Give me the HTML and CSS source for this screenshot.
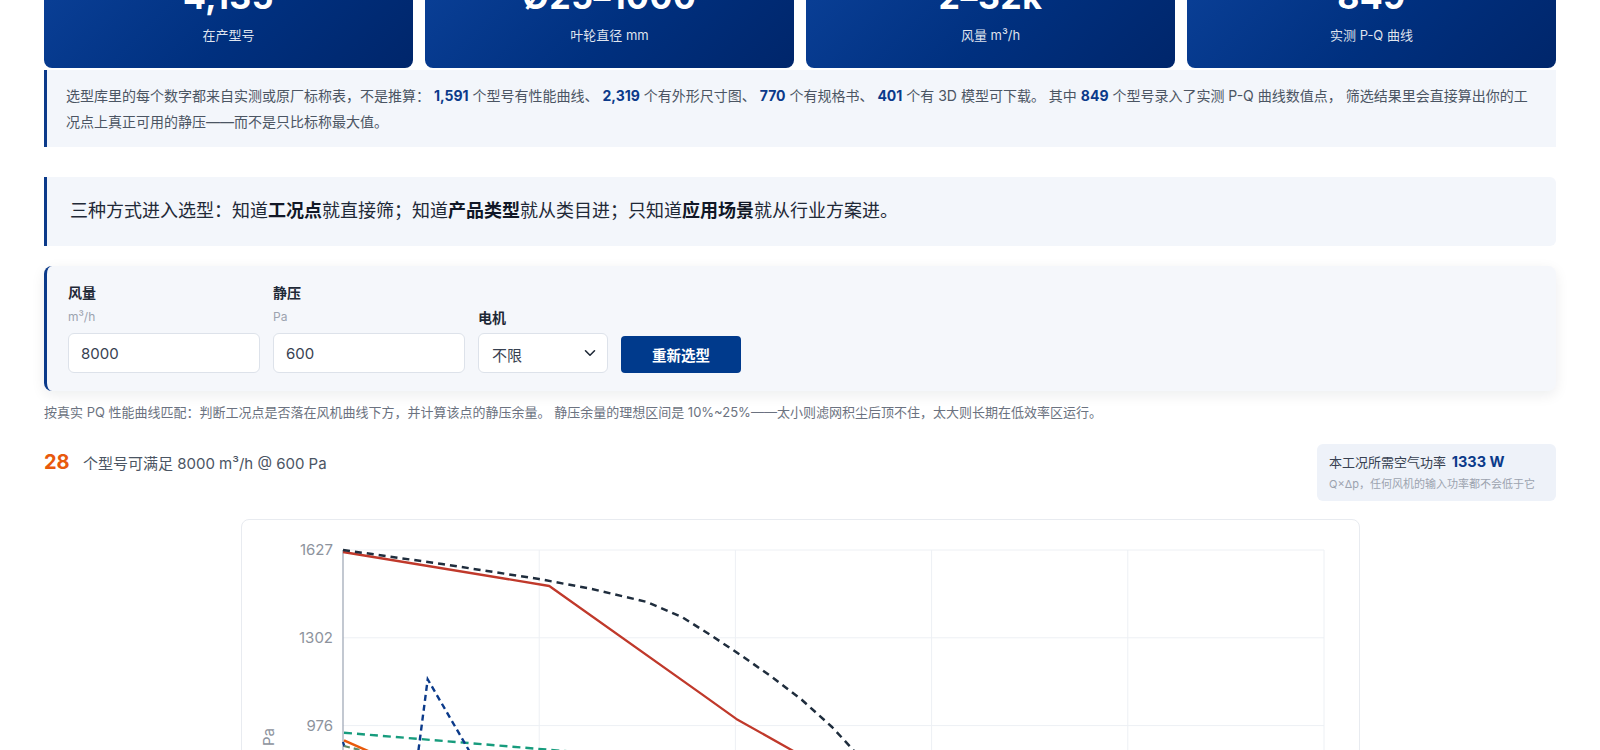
FILE: index.html
```html
<!DOCTYPE html>
<html lang="zh-CN">
<head>
<meta charset="utf-8">
<title>风机选型</title>
<link rel="stylesheet" href="styles.css">
</head>
<body>
<main class="page">
  <section class="stats">
    <div class="stat"><div class="stat-num">4,135</div><div class="stat-label">在产型号</div></div>
    <div class="stat"><div class="stat-num">Ø25–1000</div><div class="stat-label">叶轮直径 mm</div></div>
    <div class="stat"><div class="stat-num">2–32k</div><div class="stat-label">风量 m³/h</div></div>
    <div class="stat"><div class="stat-num">849</div><div class="stat-label">实测 P-Q 曲线</div></div>
  </section>

  <section class="info">
    选型库里的每个数字都来自实测或原厂标称表，不是推算： <b>1,591</b> 个型号有性能曲线、 <b>2,319</b> 个有外形尺寸图、 <b>770</b> 个有规格书、 <b>401</b> 个有 3D 模型可下载。 其中 <b>849</b> 个型号录入了实测 P-Q 曲线数值点， 筛选结果里会直接算出你的工况点上真正可用的静压——而不是只比标称最大值。
  </section>

  <section class="banner">
    三种方式进入选型：知道<b>工况点</b>就直接筛；知道<b>产品类型</b>就从类目进；只知道<b>应用场景</b>就从行业方案进。
  </section>

  <section class="form-card">
    <div class="field">
      <div class="field-label">风量</div>
      <div class="field-unit">m³/h</div>
      <input class="field-input" type="text" value="8000">
    </div>
    <div class="field">
      <div class="field-label">静压</div>
      <div class="field-unit">Pa</div>
      <input class="field-input" type="text" value="600">
    </div>
    <div class="field">
      <div class="field-label motor-label">电机</div>
      <div class="select">
        <span>不限</span>
        <svg class="chev" width="12" height="8" viewBox="0 0 12 8"><path d="M1.5 1.8 L6 6.2 L10.5 1.8" fill="none" stroke="#1f2937" stroke-width="1.6" stroke-linecap="round" stroke-linejoin="round"/></svg>
      </div>
    </div>
    <button class="btn" type="button">重新选型</button>
  </section>

  <p class="caption">按真实 PQ 性能曲线匹配：判断工况点是否落在风机曲线下方，并计算该点的静压余量。 静压余量的理想区间是 10%~25%——太小则滤网积尘后顶不住，太大则长期在低效率区运行。</p>

  <section class="result-row">
    <div class="result-count"><span class="count">28</span><span class="count-text">个型号可满足 8000 m³/h @ 600 Pa</span></div>
    <div class="power">
      <div class="power-main">本工况所需空气功率 <b>1333 W</b></div>
      <div class="power-sub">Q×Δp，任何风机的输入功率都不会低于它</div>
    </div>
  </section>

  <section class="chart-card">
    <svg class="chart" width="1117" height="420" viewBox="0 0 1117 420">
      <g stroke="#edf0f4" stroke-width="1">
        <line x1="101" y1="30" x2="1082" y2="30"/>
        <line x1="101" y1="117.8" x2="1082" y2="117.8"/>
        <line x1="101" y1="205.6" x2="1082" y2="205.6"/>
        <line x1="101" y1="293.4" x2="1082" y2="293.4"/>
        <line x1="101" y1="381.2" x2="1082" y2="381.2"/>
        <line x1="297.2" y1="30" x2="297.2" y2="400"/>
        <line x1="493.4" y1="30" x2="493.4" y2="400"/>
        <line x1="689.6" y1="30" x2="689.6" y2="400"/>
        <line x1="885.8" y1="30" x2="885.8" y2="400"/>
        <line x1="1082" y1="30" x2="1082" y2="400"/>
      </g>
      <line x1="101" y1="30" x2="101" y2="400" stroke="#9aa3b2" stroke-width="1.2"/>
      <g class="ylab" fill="#8d939d" font-size="15" text-anchor="end">
        <text x="91" y="35">1627</text>
        <text x="91" y="123">1302</text>
        <text x="91" y="211">976</text>
      </g>
      <text class="ylab" x="0" y="0" fill="#8d939d" font-size="15" transform="translate(32 226) rotate(-90)">Pa</text>

      <polyline points="102,212.7 322,231 600,254" fill="none" stroke="#179c7d" stroke-width="2.4" stroke-dasharray="8 5"/>
      <polyline points="101,222 104,231 107,245" fill="none" stroke="#0b3a8a" stroke-width="2.3" stroke-dasharray="5 4"/>
      <polyline points="170,280 185.7,159.3 227.3,231 255,280" fill="none" stroke="#0b3a8a" stroke-width="2.4" stroke-dasharray="6 4"/>
      <polyline points="102,226 122,231 160,245" fill="none" stroke="#5f8a6a" stroke-width="2.2" stroke-dasharray="6 4"/>
      <polyline points="102,220.3 122.3,229.3 170,250" fill="none" stroke="#e8590c" stroke-width="2.5"/>
      <polyline points="101,32 307.3,66 459,173.6 494.3,198.9 554.4,232.7 700,315" fill="none" stroke="#c0392b" stroke-width="2.3" stroke-linejoin="round"/>
      <polyline points="101,30 200,44 297,59 350,69 405,82 440,97 470,116 500,136 530,157 560,180 590,207 615,234 640,266 660,295" fill="none" stroke="#1f2d3d" stroke-width="2.5" stroke-dasharray="7 5" stroke-linejoin="round"/>
    </svg>
  </section>
</main>
</body>
</html>
```

FILE: styles.css
```css
* { box-sizing: border-box; }
html, body { margin: 0; padding: 0; background: #ffffff; }
body {
  font-family: Inter, "Noto Sans CJK SC", "Noto Sans", sans-serif;
  color: #1f2937;
  overflow: hidden;
}
.page {
  width: 1512px;
  margin: -44px auto 0;
}
.stats {
  display: grid;
  grid-template-columns: repeat(4, 1fr);
  gap: 12px;
}
.stat {
  background: linear-gradient(135deg, #0b4199 0%, #00307f 55%, #00266b 100%);
  border-radius: 8px;
  color: #fff;
  text-align: center;
  padding: 20px 10px 23px;
}
.stat-num {
  font-size: 34px;
  line-height: 42px;
  font-weight: 700;
  letter-spacing: 0.5px;
}
.stat-label {
  margin-top: 8px;
  font-size: 13px;
  line-height: 19px;
  color: rgba(255,255,255,0.88);
}
.info {
  margin-top: 2px;
  background: #f3f6fb;
  border-left: 3px solid #0b3a8a;
  padding: 13px 20px 12px 19px;
  font-size: 14px;
  line-height: 26px;
  color: #4b5563;
}
.info b { color: #0b3a8a; font-weight: 700; }
.banner {
  margin-top: 30px;
  background: #f3f6fb;
  border-left: 3px solid #0b3a8a;
  border-radius: 0 6px 6px 0;
  padding: 21px 23px 22px;
  font-size: 18px;
  line-height: 26px;
  color: #1f2937;
}
.banner b { font-weight: 700; color: #111827; }
.form-card {
  margin-top: 20px;
  background: #f5f7fb;
  border-left: 3px solid #0b3a8a;
  border-radius: 8px;
  box-shadow: 0 4px 14px rgba(15, 23, 42, 0.08);
  padding: 17px 21px 18px;
  display: flex;
  align-items: flex-end;
  gap: 13px;
}
.field { display: flex; flex-direction: column; }
.field-label {
  font-size: 14px;
  line-height: 20px;
  font-weight: 600;
  color: #1f2937;
  margin-bottom: 6px;
}
.motor-label { margin-bottom: 5px; }
.field-unit {
  font-size: 12px;
  line-height: 16px;
  color: #9ca3af;
  margin-bottom: 8px;
}
.field-input {
  width: 192px;
  height: 40px;
  border: 1px solid #dde2ea;
  border-radius: 6px;
  background: #fff;
  padding: 0 12px;
  font-family: inherit;
  font-size: 15px;
  color: #374151;
  outline: none;
}
.select {
  width: 130px;
  height: 40px;
  border: 1px solid #dde2ea;
  border-radius: 6px;
  background: #fff;
  padding: 0 11px 0 13px;
  display: flex;
  align-items: center;
  justify-content: space-between;
  font-size: 15px;
  color: #374151;
}
.select span { padding-top: 3px; }
.btn {
  width: 120px;
  height: 37px;
  border: 0;
  border-radius: 4px;
  background: #003a8c;
  color: #fff;
  font-family: inherit;
  font-size: 14.5px;
  font-weight: 700;
}
.caption {
  margin: 12px 0 0;
  font-size: 13px;
  line-height: 18px;
  color: #6b7280;
}
.result-row {
  margin-top: 23px;
  display: flex;
  justify-content: space-between;
  align-items: flex-start;
}
.result-count {
  padding-top: 4px;
  display: flex;
  align-items: baseline;
}
.count {
  font-size: 20px;
  line-height: 28px;
  font-weight: 700;
  color: #e8590c;
  width: 39px;
}
.count-text {
  font-size: 15px;
  color: #4b5563;
}
.power {
  width: 239px;
  background: #eef2f9;
  border-radius: 6px;
  padding: 8px 12px 9px;
}
.power-main {
  font-size: 13px;
  line-height: 20px;
  color: #374151;
}
.power-main b {
  font-size: 14.5px;
  color: #0b3a8a;
  font-weight: 700;
  margin-left: 2px;
}
.power-sub {
  font-size: 11px;
  line-height: 16px;
  color: #9ca3af;
  margin-top: 4px;
  white-space: nowrap;
}
.chart-card {
  margin: 18px auto 0;
  width: 1119px;
  border: 1px solid #e8ebf0;
  border-radius: 8px;
  background: #fff;
  overflow: hidden;
}
.chart { display: block; }
.ylab { font-family: Inter, "Noto Sans", sans-serif; }
```
